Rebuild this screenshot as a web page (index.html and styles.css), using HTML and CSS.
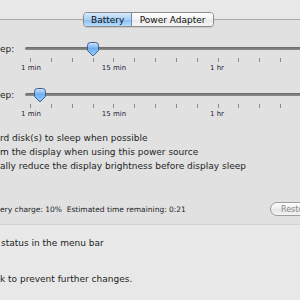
FILE: index.html
```html
<!DOCTYPE html>
<html lang="en">

<head>
    <meta charset="UTF-8">
    <meta name="viewport" content="width=device-width, initial-scale=1.0">
    <title>Energy Saver</title>
    <link rel="stylesheet" href="styles.css">
</head>

<body>
    <div class="window">
        <div class="panel">
            <div class="tabs">
                <div class="tab active">Battery</div>
                <div class="tab">Power Adapter</div>
            </div>

            <div class="slider">
                <div class="label">ep:</div>
                <div class="track">
                    <svg class="knob" style="left: 62px" width="12" height="15" viewBox="0 0 12 15">
                        <defs>
                            <linearGradient id="k1" x1="0" y1="0" x2="0" y2="1">
                                <stop offset="0" stop-color="#d4e8fc" />
                                <stop offset="0.45" stop-color="#6eaef0" />
                                <stop offset="1" stop-color="#9fd0fb" />
                            </linearGradient>
                        </defs>
                        <path d="M0.5 3.5 Q0.5 0.5 3.5 0.5 H8.5 Q11.5 0.5 11.5 3.5 V8.5 L6 14 L0.5 8.5 Z" fill="url(#k1)" stroke="#3b5f8e" />
                    </svg>
                </div>
            </div>
            <div class="ticks">
                <i></i><i></i><i></i><i></i><i></i><i></i><i></i><i></i><i></i><i></i><i></i><i></i><i></i><i></i>
            </div>
            <div class="scale">
                <span class="s1">1 min</span>
                <span class="s2">15 min</span>
                <span class="s3">1 hr</span>
            </div>

            <div class="slider second">
                <div class="label">ep:</div>
                <div class="track">
                    <svg class="knob" style="left: 9px" width="12" height="15" viewBox="0 0 12 15">
                        <defs>
                            <linearGradient id="k2" x1="0" y1="0" x2="0" y2="1">
                                <stop offset="0" stop-color="#d4e8fc" />
                                <stop offset="0.45" stop-color="#6eaef0" />
                                <stop offset="1" stop-color="#9fd0fb" />
                            </linearGradient>
                        </defs>
                        <path d="M0.5 3.5 Q0.5 0.5 3.5 0.5 H8.5 Q11.5 0.5 11.5 3.5 V8.5 L6 14 L0.5 8.5 Z" fill="url(#k2)" stroke="#3b5f8e" />
                    </svg>
                </div>
            </div>
            <div class="ticks">
                <i></i><i></i><i></i><i></i><i></i><i></i><i></i><i></i><i></i><i></i><i></i><i></i><i></i><i></i>
            </div>
            <div class="scale">
                <span class="s1">1 min</span>
                <span class="s2">15 min</span>
                <span class="s3">1 hr</span>
            </div>

            <ul class="options">
                <li>rd disk(s) to sleep when possible</li>
                <li>m the display when using this power source</li>
                <li>ally reduce the display brightness before display sleep</li>
            </ul>

            <div class="status">
                <span class="charge">ery charge: 10%&nbsp; Estimated time remaining: 0:21</span>
                <button class="restore">Restore Defaults</button>
            </div>
        </div>

        <div class="menubar">status in the menu bar</div>
        <div class="lock">k to prevent further changes.</div>
    </div>
</body>

</html>
```

FILE: styles.css
```css
* {
    margin: 0;
    padding: 0;
    box-sizing: border-box;
}

body {
    width: 300px;
    height: 300px;
    overflow: hidden;
    background-color: #e8e8e8;
    font-family: "DejaVu Sans", Verdana, sans-serif;
    color: #1e1e1e;
}

.window {
    width: 380px;
}

.panel {
    margin-top: 19px;
    background-color: #e1e1e1;
    border-top: 1px solid #a8a8a8;
    border-bottom: 1px solid #d2d2d2;
    padding-bottom: 8px;
}

.tabs {
    display: flex;
    height: 15px;
    width: 131px;
    margin: -8px 0 0 83px;
    border: 1px solid #8c8c8c;
    border-radius: 4px;
    overflow: hidden;
    font-size: 9px;
    box-shadow: 0 1px 1px rgba(0, 0, 0, 0.12);
}

.tab {
    display: flex;
    align-items: center;
    justify-content: center;
    width: 82px;
    background: linear-gradient(#ffffff, #f1f1f1 50%, #e6e6e6 51%, #f6f6f6);
    color: #111;
}

.tab.active {
    width: 49px;
    border-right: 1px solid #6d8cb3;
    background: linear-gradient(#d6e9fb, #a9d0f6 50%, #84bdf2 51%, #b9defc);
}

.slider {
    display: flex;
    align-items: center;
    height: 15px;
    margin-top: 14px;
}

.slider.second {
    margin-top: 13px;
}

.label {
    width: 25px;
    font-size: 9px;
}

.track {
    position: relative;
    flex: 1;
    height: 3px;
    border-radius: 2px;
    background: linear-gradient(#6a6a6a, #8e8e8e);
}

.knob {
    position: absolute;
    top: -5px;
}

.ticks {
    display: flex;
    justify-content: space-between;
    width: 272px;
    height: 4px;
    margin: 2px 0 0 30px;
}

.ticks i {
    width: 1px;
    height: 4px;
    background-color: #8a8a8a;
}

.scale {
    display: flex;
    height: 12px;
    line-height: 12px;
    font-size: 7px;
    color: #23233a;
}

.scale span {
    width: 40px;
    text-align: center;
}

.s1 {
    margin-left: 11px;
}

.s2 {
    margin-left: 43px;
}

.s3 {
    margin-left: 63px;
}

.options {
    list-style: none;
    margin-top: 11px;
    font-size: 9px;
    line-height: 14px;
}

.status {
    display: flex;
    align-items: center;
    height: 14px;
    margin-top: 29px;
    font-size: 7.5px;
}

.charge {
    width: 270px;
    flex-shrink: 0;
}

.restore {
    flex-shrink: 0;
    white-space: nowrap;
    height: 14px;
    padding: 0 10px;
    border: 1px solid #9c9c9c;
    border-radius: 7px;
    background: linear-gradient(#fdfdfd, #eeeeee 50%, #e4e4e4 51%, #f4f4f4);
    font-family: "DejaVu Sans", Verdana, sans-serif;
    font-size: 8px;
    color: #8a8a8a;
}

.menubar {
    margin-top: 11px;
    font-size: 9px;
    line-height: 14px;
    padding-left: 1px;
}

.lock {
    margin-top: 22px;
    font-size: 9px;
    line-height: 14px;
}
```
